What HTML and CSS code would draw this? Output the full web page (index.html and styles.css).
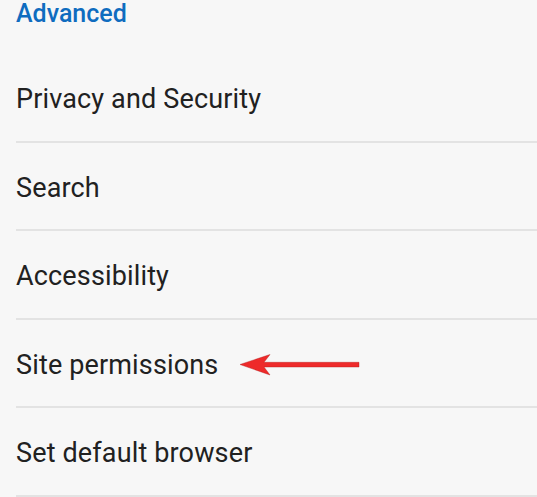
FILE: index.html
```html
<!DOCTYPE html>
<html>
<head>
<meta charset="utf-8">
<link rel="stylesheet" href="styles.css">
</head>
<body>
<div class="screen">
  <div class="section-title">Advanced</div>
  <ul class="list">
    <li class="row">Privacy and Security</li>
    <li class="row">Search</li>
    <li class="row">Accessibility</li>
    <li class="row">Site permissions</li>
    <li class="row">Set default browser</li>
  </ul>
  <svg class="arrow" width="124" height="24" viewBox="0 0 124 24">
    <polygon points="0,10.5 30,0.5 24,8.3 119,8.3 119,13 24,13 30,21" fill="#ee2a2a" stroke="#b01818" stroke-width="0.4"/>
  </svg>
</div>
</body>
</html>
```
FILE: styles.css
```css
html, body {
  margin: 0;
  padding: 0;
  background: #f7f7f7;
}
.screen {
  position: relative;
  width: 537px;
  height: 497px;
  overflow: hidden;
  background: #f7f7f7;
  font-family: Roboto, "Noto Sans", sans-serif;
}
.section-title {
  padding-left: 16px;
  height: 54px;
  line-height: 28px;
  font-size: 25px;
  font-weight: 500;
  color: #0f6cbf;
}
.list {
  list-style: none;
  margin: 0;
  padding: 0 0 0 16px;
}
.row {
  box-sizing: border-box;
  height: 88.5px;
  padding: 4px 0 0 0;
  display: flex;
  align-items: center;
  border-bottom: 2px solid #e3e3e3;
  font-size: 27px;
  letter-spacing: 0.15px;
  color: #212121;
}
.arrow {
  position: absolute;
  left: 240px;
  top: 354px;
}
```
